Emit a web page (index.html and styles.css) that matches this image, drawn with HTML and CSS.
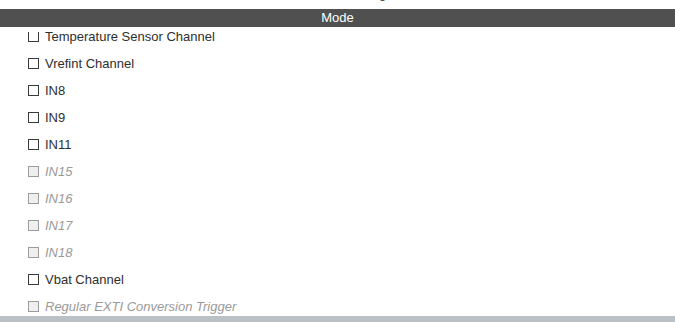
FILE: index.html
```html
<!DOCTYPE html>
<html lang="en">
<head>
  <meta charset="UTF-8" />
  <title>ADC1 Mode and Configuration</title>
  <link rel="stylesheet" href="styles.css">
</head>
<body>

  <!-- panel title, mostly scrolled out of view -->
  <div class="panel-title">
    <span>ADC1 Mode and Configuration</span>
  </div>

  <div class="section-head">Mode</div>

  <div class="scroll-area">
    <ul class="channel-list">
      <li class="channel"><span class="box"></span>Temperature Sensor Channel</li>
      <li class="channel"><span class="box"></span>Vrefint Channel</li>
      <li class="channel"><span class="box"></span>IN8</li>
      <li class="channel"><span class="box"></span>IN9</li>
      <li class="channel"><span class="box"></span>IN11</li>
      <li class="channel disabled"><span class="box"></span>IN15</li>
      <li class="channel disabled"><span class="box"></span>IN16</li>
      <li class="channel disabled"><span class="box"></span>IN17</li>
      <li class="channel disabled"><span class="box"></span>IN18</li>
      <li class="channel"><span class="box"></span>Vbat Channel</li>
      <li class="channel disabled"><span class="box"></span>Regular EXTI Conversion Trigger</li>
    </ul>
  </div>

  <div class="bottom-bar"></div>

</body>
</html>
```

FILE: styles.css
```css
* {
  box-sizing: border-box;
}

body {
  margin: 0;
  padding: 0;
  background: #fff;
  font-family: 'Liberation Sans', Arial, sans-serif;
  font-size: 13px;
  color: #333;
  height: 322px;
  overflow: hidden;
}

.panel-title {
  height: 9px;
  overflow: hidden;
  text-align: center;
  color: #333;
}

.panel-title span {
  display: block;
  line-height: 13px;
  margin-top: -13px;
}

.section-head {
  height: 18px;
  line-height: 18px;
  background: #4f504f;
  color: #fff;
  text-align: center;
  font-size: 13px;
}

/* list is scrolled, its first row slides under the header */
.scroll-area {
  height: 284px;
  margin-top: 5px;
  overflow: hidden;
}

.channel-list {
  list-style: none;
  margin: -9px 0 0;
  padding: 0 0 0 28px;
}

.channel {
  height: 27px;
  display: flex;
  align-items: center;
  gap: 6px;
  color: #2e2e2e;
}

.box {
  width: 11px;
  height: 11px;
  border: 1px solid #3a3a3a;
  background: #fff;
  flex-shrink: 0;
}

.channel.disabled {
  color: #9a9a9a;
  font-style: italic;
}

.channel.disabled .box {
  border-color: #9c9c9c;
  background: #efefef;
}

.bottom-bar {
  height: 6px;
  background: #b9c1c7;
}
```
